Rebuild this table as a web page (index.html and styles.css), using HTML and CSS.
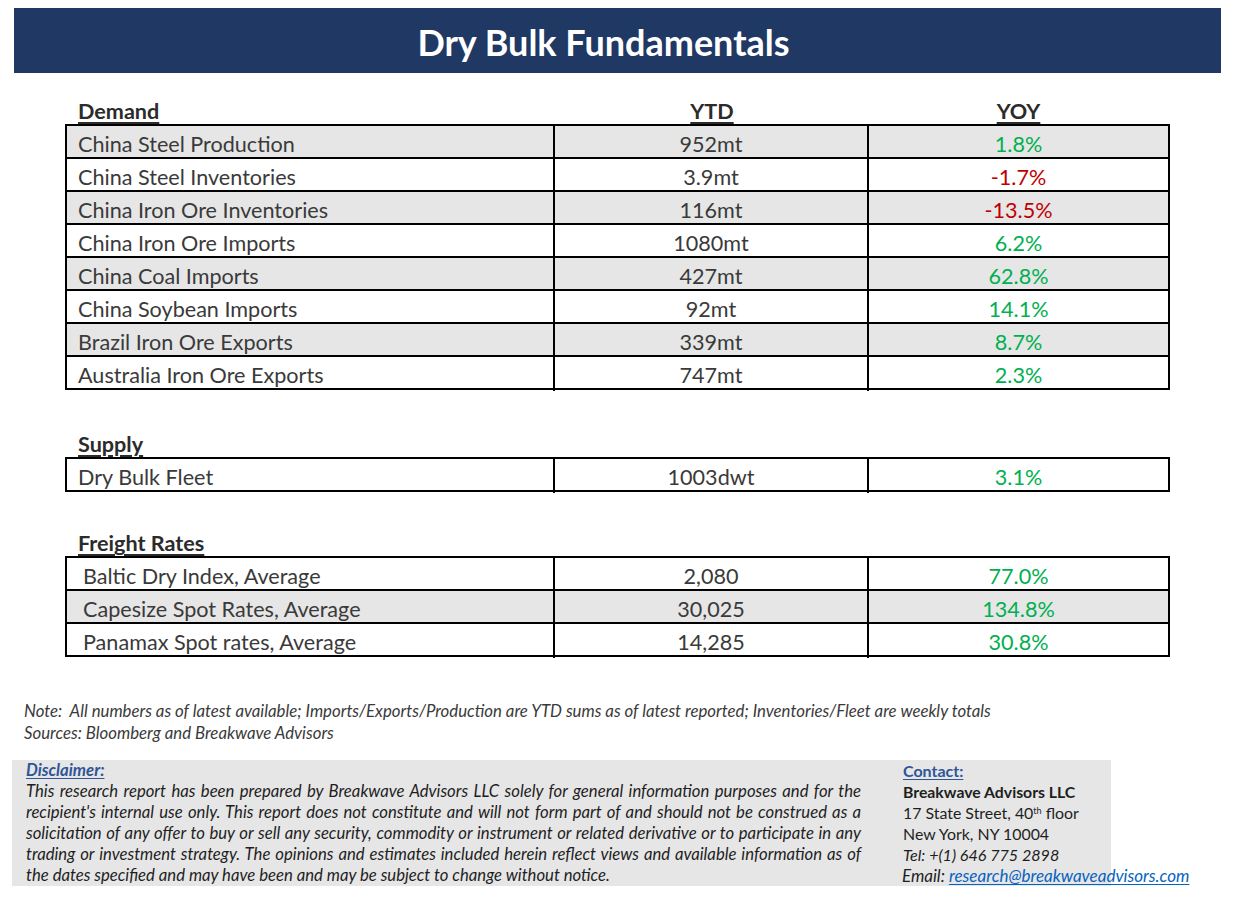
FILE: index.html
```html
<!DOCTYPE html>
<html lang="en">
<head>
<meta charset="utf-8">
<title>Dry Bulk Fundamentals</title>
<link rel="stylesheet" href="styles.css">
</head>
<body>
<header class="banner"><h1 class="banner-title">Dry Bulk Fundamentals</h1></header>

<main class="content">
  <section class="section section-demand">
    <div class="sec-head">
      <span class="h-label">Demand</span>
      <span class="h-col">YTD</span>
      <span class="h-col">YOY</span>
    </div>
    <div class="tbl">
      <div class="row shade"><span class="c-label">China Steel Production</span><span class="c-val">952mt</span><span class="c-val up">1.8%</span></div>
      <div class="row"><span class="c-label">China Steel Inventories</span><span class="c-val">3.9mt</span><span class="c-val down">-1.7%</span></div>
      <div class="row shade"><span class="c-label">China Iron Ore Inventories</span><span class="c-val">116mt</span><span class="c-val down">-13.5%</span></div>
      <div class="row"><span class="c-label">China Iron Ore Imports</span><span class="c-val">1080mt</span><span class="c-val up">6.2%</span></div>
      <div class="row shade"><span class="c-label">China Coal Imports</span><span class="c-val">427mt</span><span class="c-val up">62.8%</span></div>
      <div class="row"><span class="c-label">China Soybean Imports</span><span class="c-val">92mt</span><span class="c-val up">14.1%</span></div>
      <div class="row shade"><span class="c-label">Brazil Iron Ore Exports</span><span class="c-val">339mt</span><span class="c-val up">8.7%</span></div>
      <div class="row"><span class="c-label">Australia Iron Ore Exports</span><span class="c-val">747mt</span><span class="c-val up">2.3%</span></div>
    </div>
  </section>

  <section class="section section-supply">
    <div class="sec-head"><span class="h-label">Supply</span></div>
    <div class="tbl">
      <div class="row"><span class="c-label">Dry Bulk Fleet</span><span class="c-val">1003dwt</span><span class="c-val up">3.1%</span></div>
    </div>
  </section>

  <section class="section section-freight">
    <div class="sec-head"><span class="h-label">Freight Rates</span></div>
    <div class="tbl tbl-freight">
      <div class="row"><span class="c-label">Baltic Dry Index, Average</span><span class="c-val">2,080</span><span class="c-val up">77.0%</span></div>
      <div class="row shade"><span class="c-label">Capesize Spot Rates, Average</span><span class="c-val">30,025</span><span class="c-val up">134.8%</span></div>
      <div class="row"><span class="c-label">Panamax Spot rates, Average</span><span class="c-val">14,285</span><span class="c-val up">30.8%</span></div>
    </div>
  </section>
</main>

<div class="notes">
  <p class="note">Note:&nbsp; All numbers as of latest available; Imports/Exports/Production are YTD sums as of latest reported; Inventories/Fleet are weekly totals</p>
  <p class="note">Sources: Bloomberg and Breakwave Advisors</p>
</div>

<footer class="footer">
  <div class="disclaimer">
    <div class="f-title">Disclaimer:</div>
    <span class="j-line">This research report has been prepared by Breakwave Advisors LLC solely for general information purposes and for the</span>
    <span class="j-line">recipient's internal use only. This report does not constitute and will not form part of and should not be construed as a</span>
    <span class="j-line">solicitation of any offer to buy or sell any security, commodity or instrument or related derivative or to participate in any</span>
    <span class="j-line">trading or investment strategy. The opinions and estimates included herein reflect views and available information as of</span>
    <span class="j-line last">the dates specified and may have been and may be subject to change without notice.</span>
  </div>
  <div class="contact">
    <div class="f-title upright">Contact:</div>
    <div class="ct-line strong">Breakwave Advisors LLC</div>
    <div class="ct-line">17 State Street, 40<sup>th</sup> floor</div>
    <div class="ct-line">New York, NY 10004</div>
    <div class="ct-line ital">Tel: +(1) 646 775 2898</div>
    <div class="ct-line ital email">Email: <a class="mail" href="#">research@breakwaveadvisors.com</a></div>
  </div>
</footer>
</body>
</html>
```

FILE: styles.css
```css
* { box-sizing: border-box; }

html, body {
  margin: 0;
  padding: 0;
  background: #ffffff;
}

body {
  font-family: Lato, "Liberation Sans", sans-serif;
  color: #3a3a3a;
  width: 1236px;
}

.banner {
  margin: 8px 15px 0 14px;
  height: 65px;
  background: #203864;
  display: flex;
  align-items: center;
  justify-content: center;
  padding-right: 28px;
}

.banner-title {
  margin: 0;
  color: #ffffff;
  font-weight: 700;
  font-size: 36px;
  line-height: 1;
  padding-top: 2px;
}

.content {
  padding-left: 65px;
}

.section-demand { padding-top: 25px; }
.section-supply { padding-top: 41px; }
.section-freight { padding-top: 38px; }

.sec-head {
  display: grid;
  grid-template-columns: 488px 314px 299px;
  padding-left: 2px;
  width: 1105px;
  height: 26px;
  line-height: 26px;
  font-size: 21.6px;
  font-weight: 700;
  color: #2b2b2b;
}

.h-label {
  padding-left: 11px;
}
.h-label,
.h-col {
  text-decoration: underline;
  text-decoration-thickness: 2px;
  text-underline-offset: 3px;
}
.h-label { justify-self: start; }
.h-col { justify-self: center; }

.tbl {
  width: 1105px;
  border: 2px solid #000;
}

.row {
  display: grid;
  grid-template-columns: 488px 314px 1fr;
  height: 33px;
  border-bottom: 2px solid #000;
  font-size: 21.6px;
  line-height: 31px;
}
.row:last-child {
  border-bottom: none;
  height: 31px;
}
.row.shade { background: #e6e6e6; }

.c-label,
.c-val {
  border-right: 2px solid #000;
  white-space: nowrap;
  padding-top: 3px;
}
.c-val:last-child { border-right: none; }

.c-label { padding-left: 11px; }
.tbl-freight .c-label { padding-left: 16px; }
.c-val { text-align: center; }

.up { color: #00b050; }
.down { color: #c00000; }

.notes {
  margin-top: 43px;
  padding-left: 24px;
}
.note {
  margin: 0;
  font-style: italic;
  font-size: 16.8px;
  line-height: 22px;
  color: #3a3a3a;
  white-space: nowrap;
}

.footer {
  margin: 16px 0 0 12px;
  width: 1099px;
  height: 126px;
  background: #e6e6e6;
  display: flex;
  font-size: 15.9px;
  line-height: 21px;
  color: #1e1e1e;
}

.disclaimer {
  flex: none;
  width: 849px;
  padding-left: 14px;
  font-style: italic;
  font-size: 16.7px;
}

.j-line {
  display: block;
  text-align: justify;
  text-align-last: justify;
  white-space: nowrap;
}
.j-line.last { text-align-last: left; }

.f-title {
  color: #2f5597;
  font-weight: 700;
  font-style: italic;
  text-decoration: underline;
  text-underline-offset: 2px;
}
.f-title.upright { font-style: normal; font-size: 16px; }

.contact {
  flex: none;
  padding-left: 42px;
}
.ct-line { white-space: nowrap; }
.ct-line.strong { font-weight: 700; font-size: 15.8px; }
.ct-line.ital { font-style: italic; font-size: 16.1px; }
.ct-line.email { margin-left: -1px; font-size: 17px; }

.ct-line sup {
  font-size: 9px;
  line-height: 0;
  vertical-align: 5px;
}

.mail {
  color: #0563c1;
  text-decoration: underline;
  text-underline-offset: 2px;
}
```
